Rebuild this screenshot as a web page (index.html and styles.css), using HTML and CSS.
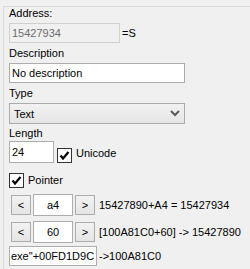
FILE: index.html
```html
<!DOCTYPE html>
<html lang="en">
<head>
    <meta charset="UTF-8">
    <title>Pointer</title>
    <link rel="stylesheet" href="styles.css">
</head>
<body>
    <div class="panel">
        <div class="label">Address:</div>
        <div class="row addrRow">
            <input class="edit addr" type="text" value="15427934" disabled>
            <span class="eq">=S</span>
        </div>

        <div class="label gapTop">Description</div>
        <input class="edit desc" type="text" value="No description">

        <div class="label gapTop">Type</div>
        <div class="combo">
            <span>Text</span>
            <svg class="chev" width="10" height="7" viewBox="0 0 10 7">
                <polyline points="1,1 5,5 9,1" fill="none" stroke="#5a5a5a" stroke-width="2"/>
            </svg>
        </div>

        <div class="label lenLabel">Length</div>
        <div class="row lenRow">
            <input class="edit len" type="text" value="24">
            <span class="check uni">
                <svg width="13" height="13" viewBox="0 0 13 13">
                    <polyline points="2.5,6.5 5,9.5 10.5,3" fill="none" stroke="#000" stroke-width="2.2"/>
                </svg>
            </span>
            <span class="checkText">Unicode</span>
        </div>

        <div class="row ptrRow">
            <span class="check">
                <svg width="13" height="13" viewBox="0 0 13 13">
                    <polyline points="2.5,6.5 5,9.5 10.5,3" fill="none" stroke="#000" stroke-width="2.2"/>
                </svg>
            </span>
            <span class="checkText">Pointer</span>
        </div>

        <div class="row offRow first">
            <button class="btn">&lt;</button>
            <input class="edit off" type="text" value="a4">
            <button class="btn">&gt;</button>
            <span class="res">15427890+A4 = 15427934</span>
        </div>
        <div class="row offRow">
            <button class="btn">&lt;</button>
            <input class="edit off" type="text" value="60">
            <button class="btn">&gt;</button>
            <span class="res">[100A81C0+60] -&gt; 15427890</span>
        </div>
        <div class="row baseRow">
            <input class="edit base" type="text" value='exe"+00FD1D9C'>
            <span class="baseRes">-&gt;100A81C0</span>
        </div>
    </div>
</body>
</html>
```
FILE: styles.css
```css
* {
    margin: 0;
    padding: 0;
    box-sizing: border-box;
}
body {
    background: #f0f0f0;
    font-family: "Liberation Sans", Arial, sans-serif;
    font-size: 11px;
    color: #000;
    overflow: hidden;
}
.panel {
    margin: 6px 0 0 3px;
    height: 263px;
    padding-left: 5px;
    border-top: 1px solid #dadada;
    border-left: 1px solid #dadada;
}
.label {
    height: 13px;
    line-height: 13px;
}
.gapTop {
    margin-top: 4px;
}
.row {
    display: flex;
    align-items: center;
}
.edit {
    font-family: inherit;
    font-size: 11px;
    color: #000;
    height: 20px;
    padding: 0 2px;
    border: 1px solid #adadad;
    background: #fff;
    outline: none;
}
.addrRow {
    margin-top: 3px;
}
.addr {
    width: 111px;
    background: #f0f0f0;
    border-color: #d0d0d0;
    color: #6d6d6d;
}
.eq {
    margin-left: 2px;
}
.desc {
    display: block;
    margin-top: 3px;
    width: 176px;
}
.combo {
    margin-top: 3px;
    width: 176px;
    height: 21px;
    border: 1px solid #acacac;
    background: linear-gradient(#f2f2f2, #e5e5e5);
    display: flex;
    align-items: center;
    justify-content: space-between;
    padding: 0 4px 0 4px;
}
.chev {
    display: block;
    margin-right: 0px;
}
.lenLabel {
    margin-top: 3px;
}
.lenRow {
    margin-top: 1px;
    height: 22px;
    align-items: flex-end;
}
.len {
    width: 45px;
    height: 22px;
}
.check {
    width: 15px;
    height: 15px;
    border: 1px solid #333;
    background: #fff;
    display: flex;
    align-items: center;
    justify-content: center;
}
.uni {
    margin-left: 3px;
}
.checkText {
    margin-left: 4px;
    line-height: 13px;
}
.lenRow .checkText {
    margin-bottom: 3px;
}
.ptrRow {
    margin-top: 10px;
}
.offRow {
    height: 22px;
    margin-top: 5px;
}
.offRow.first {
    margin-top: 6px;
}
.btn {
    width: 20px;
    height: 20px;
    margin-left: 2px;
    border: 1px solid #acacac;
    background: linear-gradient(#f2f2f2, #e5e5e5);
    font-family: inherit;
    font-size: 11px;
    color: #000;
}
.off {
    width: 40px;
    height: 22px;
    margin-left: 2px;
    text-align: center;
}
.res {
    margin-left: 4px;
}
.baseRow {
    margin-top: 3px;
}
.base {
    width: 88px;
    padding: 0 1px;
}
.baseRes {
    margin-left: 2px;
}
```
